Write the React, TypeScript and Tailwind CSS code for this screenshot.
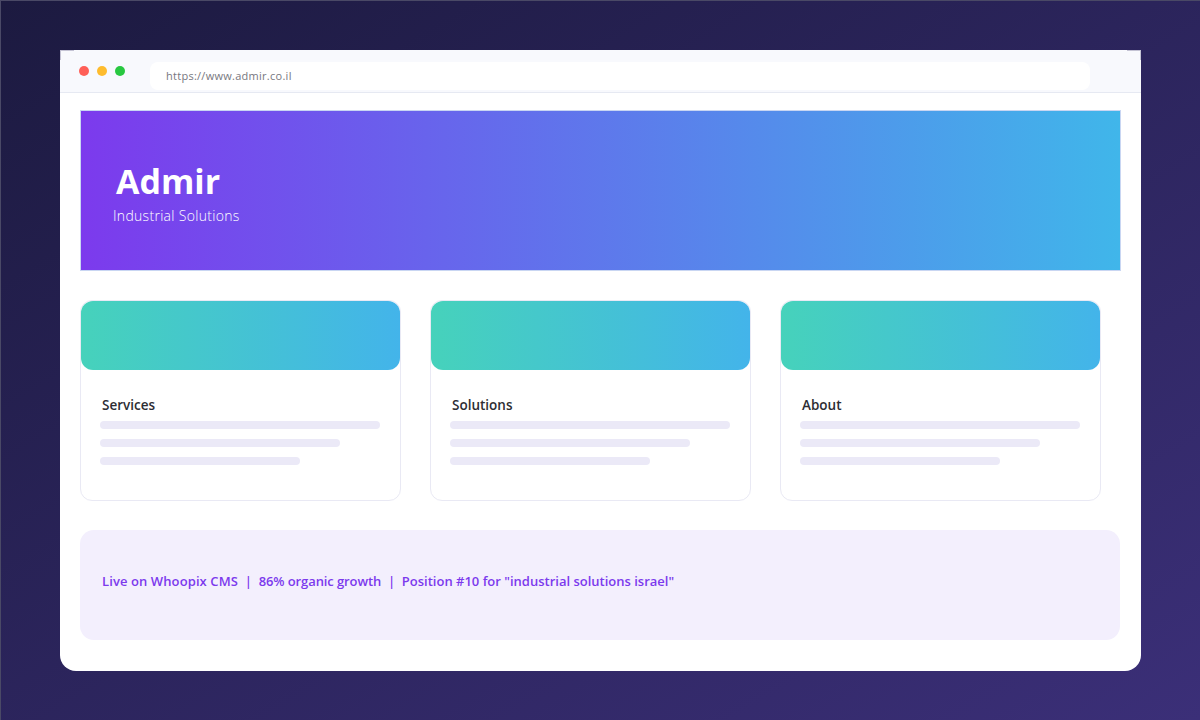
const cards = ['Services', 'Solutions', 'About'];

function Card({ title }: { title: string }) {
  return (
    <div className="h-[201px] w-[321px] rounded-[12px] border border-[#e9e9f4] bg-white">
      <div className="h-[69px] rounded-[12px] bg-linear-to-r/srgb from-[#46d2bb] to-[#43b4ea]" />
      <div className="pt-[25px] pl-[19px]">
        <div className="ml-0.5 h-5 text-[13.5px] leading-5 font-semibold text-[#2d2d33]">{title}</div>
        <div className="mt-[6px] flex flex-col gap-[10px]">
          <div className="h-2 w-[280px] rounded-full bg-[#ebe9f7]" />
          <div className="h-2 w-[240px] rounded-full bg-[#ebe9f7]" />
          <div className="h-2 w-[200px] rounded-full bg-[#ebe9f7]" />
        </div>
      </div>
    </div>
  );
}

export default function App() {
  return (
    <div className="h-[720px] w-[1200px] overflow-hidden border-t border-l border-[#4a4966] bg-linear-to-br/srgb from-[#1c1a40] to-[#3b2f78] pt-[49px] pl-[59px] font-['Open_Sans',sans-serif]">
      <div className="relative h-[621px] w-[1081px] rounded-b-[16px] bg-white">
        {/* Browser bar */}
        <div className="flex h-[43px] items-start border-b border-[#e6e9f2] bg-[#f8f9fd] pl-[19px]">
          <div className="mt-4 flex gap-2">
            <span className="h-2.5 w-2.5 rounded-full bg-[#ff5f57]" />
            <span className="h-2.5 w-2.5 rounded-full bg-[#febc2e]" />
            <span className="h-2.5 w-2.5 rounded-full bg-[#28c840]" />
          </div>
          <div className="mt-3 ml-[25px] flex h-[28px] w-[940px] items-center rounded-[8px] bg-white pl-4 text-[11px] tracking-[0.27px] text-[#777780]">
            https://www.admir.co.il
          </div>
        </div>
        {/* faint corner fringe */}
        <div className="absolute top-0 left-0 h-2.5 w-3.5 border-t border-l border-[#c4c3d4]" />
        <div className="absolute top-0 right-0 h-2.5 w-3.5 border-t border-r border-[#c4c3d4]" />

        <div className="pt-[17px] pl-5">
          {/* Hero */}
          <div className="flex h-[161px] w-[1041px] flex-col border border-[#c9d6f2] bg-linear-to-r/srgb from-[#7c3aed] to-[#40b6ea] pt-[49px] pl-[32px] text-white">
            <div className="ml-[3px] text-[34px] leading-[42px] font-bold">Admir</div>
            <div className="mt-1 text-[14px] leading-5 font-light tracking-[0.3px]">Industrial Solutions</div>
          </div>

          {/* Cards */}
          <div className="mt-[29px] flex gap-[29px]">
            {cards.map(title => (
              <Card key={title} title={title} />
            ))}
          </div>

          {/* Stats */}
          <div className="mt-[29px] h-[110px] w-[1040px] rounded-[14px] bg-[#f3effd] pt-[41px] pl-[22px] text-[13px] leading-[20px] font-semibold whitespace-pre text-[#7c3aed]">
            <span className="tracking-[0.1px]">Live on Whoopix CMS</span>
            {'  |  '}
            <span className="tracking-[-0.1px]">86% organic growth</span>
            {'  |  '}
            {'Position #10 for "industrial solutions israel"'}
          </div>
        </div>
      </div>
    </div>
  );
}
